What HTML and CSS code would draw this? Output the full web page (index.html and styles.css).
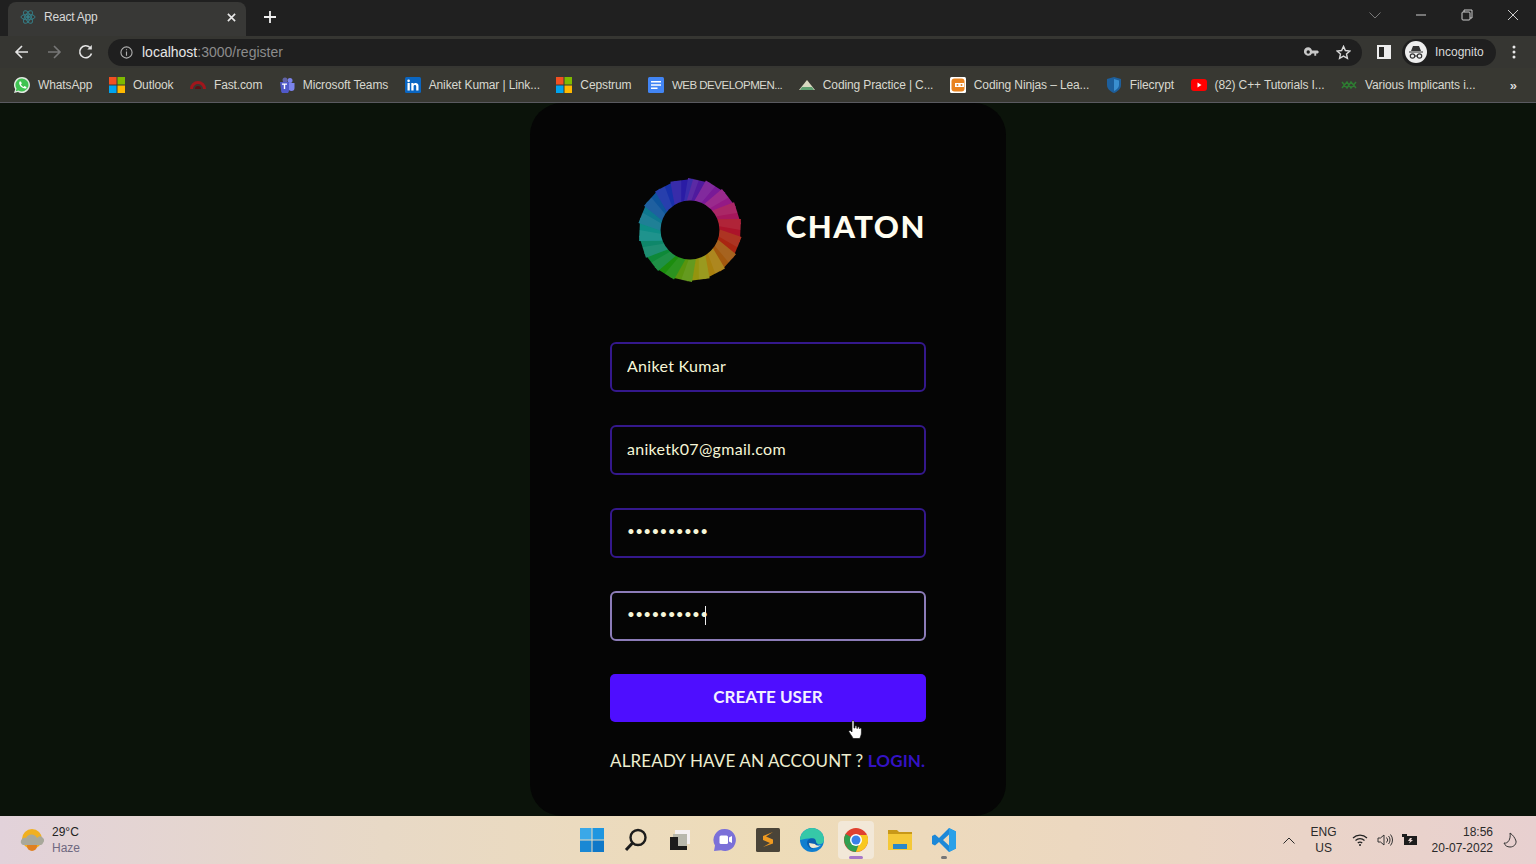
FILE: index.html
```html
<!DOCTYPE html>
<html lang="en">

<head>
    <meta charset="UTF-8">
    <meta name="viewport" content="width=device-width, initial-scale=1.0">
    <title>React App</title>
    <link rel="stylesheet" href="styles.css">
</head>

<body>
    <!-- barra de abas -->
    <header class="abas">
        <div class="aba">
            <svg class="favicon" viewBox="0 0 16 16" fill="none" stroke="#357d86" stroke-width="1">
                <ellipse cx="8" cy="8" rx="7" ry="2.8"/>
                <ellipse cx="8" cy="8" rx="7" ry="2.8" transform="rotate(60 8 8)"/>
                <ellipse cx="8" cy="8" rx="7" ry="2.8" transform="rotate(120 8 8)"/>
                <circle cx="8" cy="8" r="1.4" fill="#357d86"/>
            </svg>
            <span class="aba-titulo">React App</span>
            <svg class="aba-fechar" viewBox="0 0 10 10" stroke="#e8e8e8" stroke-width="1.8"><path d="M1 1l8 8M9 1l-8 8"/></svg>
        </div>
        <svg class="aba-nova" viewBox="0 0 12 12" stroke="#f0f0f0" stroke-width="1.8"><path d="M6 0v12M0 6h12"/></svg>
        <div class="janela">
            <svg viewBox="0 0 12 12" fill="none" stroke="#777" stroke-width="1"><path d="M0.5 3.5L6 9l5.500-5.500"/></svg>
            <svg viewBox="0 0 12 12" fill="none" stroke="#ccc" stroke-width="1"><path d="M1 6h10"/></svg>
            <svg viewBox="0 0 12 12" fill="none" stroke="#ccc" stroke-width="1"><rect x="1" y="3" width="8" height="8" rx="1"/><path d="M3 3V1h8v8H9"/></svg>
            <svg viewBox="0 0 12 12" fill="none" stroke="#ccc" stroke-width="1"><path d="M1 1l10 10M11 1L1 11"/></svg>
        </div>
    </header>

    <!-- barra de endereco -->
    <div class="ferramentas">
        <svg class="ico-nav" viewBox="0 0 16 16" fill="none" stroke="#e4e4e4" stroke-width="1.600"><path d="M14 8H2M8 2L2 8l6 6"/></svg>
        <svg class="ico-nav" viewBox="0 0 16 16" fill="none" stroke="#777" stroke-width="1.600"><path d="M2 8h12M8 2l6 6-6 6"/></svg>
        <svg class="ico-nav" viewBox="0 0 16 16" fill="none" stroke="#e4e4e4" stroke-width="1.600"><path d="M13.500 9.500A6 6 0 1 1 12 3.500"/><path d="M13.800 1v4.500H9.300" fill="#e4e4e4" stroke="none"/></svg>
        <div class="endereco">
            <svg class="ico-info" viewBox="0 0 14 14" fill="none" stroke="#b0b0b0" stroke-width="1.200"><circle cx="7" cy="7" r="6"/><path d="M7 6v4.500M7 3.500v1.200"/></svg>
            <span class="url"><span class="url-host">localhost</span>:3000/register</span>
            <svg class="ico-chave" viewBox="0 0 16 10" fill="#c8c8c8"><path d="M4.500 0a4.500 4.500 0 1 0 4 6.500H11V9h2V6.500h1.500L16 5l-1.500-1.500h-6A4.500 4.500 0 0 0 4.500 0zm0 3.200a1.800 1.800 0 1 1 0 3.600 1.800 1.800 0 0 1 0-3.600z"/></svg>
            <svg class="ico-estrela" viewBox="0 0 16 16" fill="none" stroke="#d8d8d8" stroke-width="1.500"><path d="M8 1.500l2 4.400 4.800.5-3.600 3.200 1 4.700L8 11.900l-4.200 2.400 1-4.700L1.200 6.400 6 5.900z"/></svg>
        </div>
        <svg class="ico-painel" viewBox="0 0 14 14"><path d="M0 0h14v14H0z" fill="#eee"/><path d="M2 2h5v10H2z" fill="#2a2a28"/></svg>
        <div class="anonimo">
            <svg class="anonimo-ico" viewBox="0 0 22 22">
                <circle cx="11" cy="11" r="11" fill="#eee"/>
                <path d="M6 10l2-5h6l2 5zM4 10.500h14v1H4z" fill="#333"/>
                <g fill="none" stroke="#333" stroke-width="1.200"><circle cx="7.500" cy="15" r="2.200"/><circle cx="14.500" cy="15" r="2.200"/><path d="M9.700 15h2.600"/></g>
            </svg>
            <span>Incognito</span>
        </div>
        <svg class="ico-menu" viewBox="0 0 4 14" fill="#e8e8e8"><circle cx="2" cy="2" r="1.500"/><circle cx="2" cy="7" r="1.500"/><circle cx="2" cy="12" r="1.500"/></svg>
    </div>

    <!-- favoritos -->
    <nav class="favoritos">
        <a class="fav"><svg viewBox="0 0 16 16"><path d="M8 0a8 8 0 0 0-6.800 12.200L0 16l3.900-1.100A8 8 0 1 0 8 0z" fill="#e0e8e0"/><path d="M8 1.500a6.500 6.500 0 0 0-5.500 10l-.7 2.700 2.700-.7A6.500 6.500 0 1 0 8 1.500z" fill="#3fc351"/><path d="M5.500 4.500l1.500 0 .8 2-.9 1c.6 1.200 1.500 2 2.600 2.500l1-1 1.900.9v1.400c-3.800 1.200-8.400-3.300-6.900-6.800z" fill="#fff"/></svg><span>WhatsApp</span></a>
        <a class="fav"><svg viewBox="0 0 16 16"><path d="M0 0h7.500v7.500H0z" fill="#f25022"/><path d="M8.500 0H16v7.500H8.500z" fill="#7fba00"/><path d="M0 8.500h7.500V16H0z" fill="#00a4ef"/><path d="M8.500 8.500H16V16H8.500z" fill="#ffb900"/></svg><span>Outlook</span></a>
        <a class="fav"><svg viewBox="0 0 16 16"><path d="M0 12a8 8 0 0 1 16 0h-3a5 5 0 0 0-10 0z" fill="#a0161c"/><path d="M5 12a3 3 0 0 1 6 0z" fill="#5a1014"/></svg><span>Fast.com</span></a>
        <a class="fav"><svg viewBox="0 0 16 16"><circle cx="11" cy="3.500" r="2.500" fill="#7b83eb"/><circle cx="6" cy="3" r="2.500" fill="#6264a7"/><path d="M9 6h6.500v5a3 3 0 0 1-6 0z" fill="#7b83eb"/><path d="M1 5h9v8a4 4 0 0 1-8 0z" fill="#5059c9"/><path d="M3 6.500h5v1.300H6.200V12H4.800V7.800H3z" fill="#fff"/></svg><span>Microsoft Teams</span></a>
        <a class="fav"><svg viewBox="0 0 16 16"><rect width="16" height="16" rx="1.500" fill="#0a66c2"/><path d="M2.500 6h2.300v7.500H2.500zM3.600 2.500a1.300 1.300 0 1 1 0 2.700 1.300 1.300 0 0 1 0-2.700zM6.300 6h2.200v1c.9-1.600 5-1.800 5 1.700v4.800h-2.300V9.200c0-1.700-2.600-1.600-2.600 0v4.300H6.300z" fill="#fff"/></svg><span>Aniket Kumar | Link...</span></a>
        <a class="fav"><svg viewBox="0 0 16 16"><path d="M0 0h7.500v7.500H0z" fill="#f25022"/><path d="M8.500 0H16v7.500H8.500z" fill="#7fba00"/><path d="M0 8.500h7.500V16H0z" fill="#00a4ef"/><path d="M8.500 8.500H16V16H8.500z" fill="#ffb900"/></svg><span>Cepstrum</span></a>
        <a class="fav fav-caps"><svg viewBox="0 0 16 16"><rect width="16" height="16" rx="1.500" fill="#4285f4"/><path d="M3 4h10v1.600H3zM3 7.200h10v1.600H3zM3 10.400h6.500V12H3z" fill="#fff"/></svg><span>WEB DEVELOPMEN...</span></a>
        <a class="fav"><svg viewBox="0 0 16 16"><path d="M8 3l8 10H0z" fill="#d8d8c0"/><path d="M3 10h10l2 3H1z" fill="#5fa070"/></svg><span>Coding Practice | C...</span></a>
        <a class="fav"><svg viewBox="0 0 16 16"><rect width="16" height="16" rx="1.500" fill="#fff"/><rect x="1.500" y="1.500" width="13" height="13" rx="3" fill="#e8821e"/><path d="M5 6h9v4H5z" fill="#fff"/><circle cx="7.500" cy="8" r="1" fill="#e8821e"/><circle cx="11.500" cy="8" r="1" fill="#e8821e"/></svg><span>Coding Ninjas – Lea...</span></a>
        <a class="fav"><svg viewBox="0 0 16 16"><path d="M8 0l7 2v6c0 4-3.500 6.500-7 8-3.500-1.500-7-4-7-8V2z" fill="#1d5f9c"/><path d="M8 2l5 1.500V8c0 2.800-2.500 4.700-5 6z" fill="#3a8fd0"/></svg><span>Filecrypt</span></a>
        <a class="fav"><svg viewBox="0 0 16 16"><rect y="2" width="16" height="12" rx="3" fill="#f00"/><path d="M6.500 5.500l4 2.500-4 2.500z" fill="#fff"/></svg><span>(82) C++ Tutorials I...</span></a>
        <a class="fav"><svg viewBox="0 0 16 16" fill="none" stroke="#2e7d32" stroke-width="1.500"><path d="M1 5l5 6 4-6 5 6M1 11l5-6 4 6 5-6"/></svg><span>Various Implicants i...</span></a>
        <span class="mais">»</span>
    </nav>

    <!-- pagina de cadastro -->
    <main class="pagina">
        <form class="cartao">
            <div class="marca">
                <svg class="logo" viewBox="-53 -53 106 106">
                    <defs>
                        <polygon id="gomo" points="-6,-29 7,-29 21,-48 -2,-53"/>
                        <polygon id="faceta" points="-6,-29 1,-29 9,-51 -2,-53"/>
                    </defs>
                    <use href="#gomo" fill="#5a1eb4" transform="rotate(0)"/>
                    <use href="#gomo" fill="#8a1eac" transform="rotate(20)"/>
                    <use href="#gomo" fill="#a81e98" transform="rotate(40)"/>
                    <use href="#gomo" fill="#bc1a68" transform="rotate(60)"/>
                    <use href="#gomo" fill="#c41630" transform="rotate(80)"/>
                    <use href="#gomo" fill="#c02a14" transform="rotate(100)"/>
                    <use href="#gomo" fill="#b86410" transform="rotate(120)"/>
                    <use href="#gomo" fill="#c09210" transform="rotate(140)"/>
                    <use href="#gomo" fill="#a8a810" transform="rotate(160)"/>
                    <use href="#gomo" fill="#66a810" transform="rotate(180)"/>
                    <use href="#gomo" fill="#20a010" transform="rotate(200)"/>
                    <use href="#gomo" fill="#109c40" transform="rotate(220)"/>
                    <use href="#gomo" fill="#109a78" transform="rotate(240)"/>
                    <use href="#gomo" fill="#10a098" transform="rotate(260)"/>
                    <use href="#gomo" fill="#1088a4" transform="rotate(280)"/>
                    <use href="#gomo" fill="#1060b0" transform="rotate(300)"/>
                    <use href="#gomo" fill="#1a38c0" transform="rotate(320)"/>
                    <use href="#gomo" fill="#3020bc" transform="rotate(340)"/>
                    <g fill="#fff" opacity="0.08">
                        <use href="#faceta" transform="rotate(0)"/>
                        <use href="#faceta" transform="rotate(20)"/>
                        <use href="#faceta" transform="rotate(40)"/>
                        <use href="#faceta" transform="rotate(60)"/>
                        <use href="#faceta" transform="rotate(80)"/>
                        <use href="#faceta" transform="rotate(100)"/>
                        <use href="#faceta" transform="rotate(120)"/>
                        <use href="#faceta" transform="rotate(140)"/>
                        <use href="#faceta" transform="rotate(160)"/>
                        <use href="#faceta" transform="rotate(180)"/>
                        <use href="#faceta" transform="rotate(200)"/>
                        <use href="#faceta" transform="rotate(220)"/>
                        <use href="#faceta" transform="rotate(240)"/>
                        <use href="#faceta" transform="rotate(260)"/>
                        <use href="#faceta" transform="rotate(280)"/>
                        <use href="#faceta" transform="rotate(300)"/>
                        <use href="#faceta" transform="rotate(320)"/>
                        <use href="#faceta" transform="rotate(340)"/>
                    </g>
                    <circle r="30" fill="#050505"/>
                </svg>
                <h1>CHATON</h1>
            </div>
            <input class="campo" type="text" value="Aniket Kumar">
            <input class="campo" type="email" value="aniketk07@gmail.com">
            <input class="campo campo-senha" type="password" value="aniketk077">
            <div class="campo-foco">
                <input class="campo campo-senha campo-ativo" type="password" value="aniketk077">
                <span class="cursor-texto"></span>
            </div>
            <div class="campo-botao">
                <button class="botao" type="button">CREATE USER</button>
                <svg class="mao" viewBox="0 0 14 19"><path d="M4 1.500c0-1.500 2-1.500 2 0V8l1 0V6.500c0-1 1.700-1 1.800 0V8.300l.8 0V7.500c0-1 1.600-1 1.700 0v1l.6 0c0-.8 1.500-.8 1.500.3V13c0 2.500-1.500 4.500-1.500 5.500H5c-.3-1.500-1.500-2.500-4-6.500-.7-1.200.8-2.200 1.800-1.200L4 12z" fill="#fff" stroke="#111" stroke-width="0.700"/></svg>
            </div>
            <p class="rodape">ALREADY HAVE AN ACCOUNT ? <a class="entrar">LOGIN.</a></p>
        </form>
    </main>

    <!-- barra de tarefas -->
    <footer class="tarefas">
        <div class="clima">
            <svg class="clima-ico" viewBox="0 0 24 24">
                <circle cx="12" cy="11" r="10" fill="#f0b020"/>
                <circle cx="12" cy="18" r="5" fill="#e08020"/>
                <path d="M1 15a4 4 0 0 1 5-5 6 6 0 0 1 11 0 3.500 3.500 0 0 1 6 5 3 3 0 0 1-2 2H3a3 3 0 0 1-2-2z" fill="#a8a89a"/>
            </svg>
            <div class="clima-texto">
                <span class="clima-temp">29°C</span>
                <span class="clima-desc">Haze</span>
            </div>
        </div>

        <div class="apps">
            <div class="app">
                <svg viewBox="0 0 24 24"><path d="M0 0h11.500v11.500H0z" fill="#3aa8e8"/><path d="M12.500 0H24v11.500H12.500z" fill="#1e96e0"/><path d="M0 12.500h11.500V24H0z" fill="#1a88d4"/><path d="M12.500 12.500H24V24H12.500z" fill="#0f78c8"/></svg>
            </div>
            <div class="app">
                <svg viewBox="0 0 24 24" fill="none" stroke="#1c1c1c"><circle cx="14" cy="9.500" r="7.500" stroke-width="2.400"/><path d="M8.500 15L2 22" stroke-width="3"/></svg>
            </div>
            <div class="app">
                <svg viewBox="0 0 24 24"><path d="M7 2h15v14H7z" fill="#f4f0f0"/><path d="M5 6h14v12H5z" fill="#b8b8ac"/><path d="M2 9h8v9h9v4H2z" fill="#1c1c1c"/></svg>
            </div>
            <div class="app">
                <svg viewBox="0 0 24 24"><path d="M13 1a11 11 0 1 1-4 21.300L2 23l1-5.500A11 11 0 0 1 13 1z" fill="#7b70d8"/><rect x="7.500" y="7.500" width="8.500" height="8.500" rx="1.500" fill="#fff"/><path d="M17 9.500l3-1.500v7l-3-1.500z" fill="#fff"/></svg>
            </div>
            <div class="app">
                <svg viewBox="0 0 24 24"><rect width="24" height="24" rx="1.500" fill="#4a4438"/><path d="M17 4L7 8v4l7 3-7 4 10-3.500v-4L10 8.500z" fill="#f09a20"/></svg>
            </div>
            <div class="app">
                <svg viewBox="0 0 24 24"><circle cx="12" cy="12" r="12" fill="#0f7ed0"/><path d="M12 0a12 12 0 0 1 12 12c0 3-3 5-6 4s-3-4-6-5C7 9.500 2 12 0 12 0 5 6 0 12 0z" fill="#36c8a8"/><path d="M7 15c0-4 4-5.500 7-4.500 3 1 1 5 4 5.500-3 3-6 1-5 5-3 0-6-3-6-6z" fill="#0a5fb0"/><path d="M9 15c0 3 2 5 4 5 3 0 6-1 8-3-2 1-5 1-6-1z" fill="#f0e8d0"/></svg>
            </div>
            <div class="app app-ativo">
                <svg viewBox="0 0 24 24"><circle cx="12" cy="12" r="12" fill="#e04030"/><path d="M12 12L2 18A12 12 0 0 1 1.600 6z" fill="#30a050"/><path d="M12 24A12 12 0 0 1 2 18l10-6 4.500 0z" fill="#30a050"/><path d="M12 24a12 12 0 0 0 11-17H12l4.500 5z" fill="#f8c820"/><circle cx="12" cy="12" r="6" fill="#fff"/><circle cx="12" cy="12" r="4.500" fill="#3a80e8"/></svg>
                <span class="marcador marcador-ativo"></span>
            </div>
            <div class="app">
                <svg viewBox="0 0 24 24"><path d="M0 2h9l2 2h13v4H0z" fill="#c89818"/><path d="M0 6h24v16H0z" fill="#f4c838"/><path d="M5 16h14v5H5z" fill="#2a88c8"/></svg>
            </div>
            <div class="app">
                <svg viewBox="0 0 24 24"><path d="M17 0l7 3.500v17L17 24 7 14l-4 3.500L0 16V8l3-1.500L7 10zM17 6.500L11 12l6 5.500z" fill="#1c88d8"/><path d="M17 0l7 3.500v17L17 24z" fill="#2aa0e8"/></svg>
                <span class="marcador"></span>
            </div>
        </div>

        <div class="bandeja">
            <svg class="band-seta" viewBox="0 0 12 7" fill="none" stroke="#2a2a2a" stroke-width="1"><path d="M0.500 6.500L6 1l5.500 5.500"/></svg>
            <div class="band-idioma"><span>ENG</span><span>US</span></div>
            <svg class="band-ico" viewBox="0 0 16 14" fill="none" stroke="#222" stroke-width="1.200"><path d="M1 5a10 10 0 0 1 14 0M3.500 7.500a6.500 6.500 0 0 1 9 0M5.800 10a3 3 0 0 1 4.400 0"/><circle cx="8" cy="12" r="1" fill="#222" stroke="none"/></svg>
            <svg class="band-ico" viewBox="0 0 16 14" fill="none" stroke="#333" stroke-width="1"><path d="M1 5v4h2.500L7 12V2L3.500 5z"/><path d="M9.500 4.500a3.500 3.500 0 0 1 0 5M11.500 3a6 6 0 0 1 0 8M13.500 1.500a8.500 8.500 0 0 1 0 11"/></svg>
            <svg class="band-ico" viewBox="0 0 16 14"><path d="M2 3h13v9H2z" fill="#1c1c1c"/><path d="M0 1h5v3H0z" fill="#1c1c1c"/><path d="M8 5l-2 3h2l-1 2.500L11 7H9l1-2z" fill="#e8d4d0"/></svg>
            <div class="band-hora"><span>18:56</span><span>20-07-2022</span></div>
            <svg class="band-lua" viewBox="0 0 14 16" fill="none" stroke="#333" stroke-width="1"><path d="M7 1c3 2 5 5 6 8 .5 3-2 6-6 6-3 0-5-1.500-6-4 4 1 7-4 6-10z"/></svg>
        </div>
    </footer>
</body>

</html>
```

FILE: styles.css
```css
* {
    margin: 0;
    padding: 0;
    box-sizing: border-box;
}

body {
    width: 100vw;
    height: 100vh;
    overflow: hidden;
    display: flex;
    flex-direction: column;
    font-family: "Liberation Sans", Arial, sans-serif;
    background-color: #0b130a;
}

/* barra de abas */
.abas {
    height: 36px;
    display: flex;
    align-items: flex-end;
    background-color: #202020;
    flex: none;
}

.aba {
    width: 238px;
    height: 34px;
    margin-left: 8px;
    padding: 0 10px 4px 12px;
    display: flex;
    align-items: center;
    background-color: #383836;
    border-radius: 8px 8px 0 0;
}

.favicon {
    width: 16px;
    height: 16px;
}

.aba-titulo {
    margin-left: 8px;
    font-size: 12px;
    letter-spacing: -0.2px;
    color: #d8d8d8;
    flex: 1;
}

.aba-fechar {
    width: 9px;
    height: 9px;
}

.aba-nova {
    width: 12px;
    height: 12px;
    margin: 0 0 13px 18px;
}

.janela {
    margin-left: auto;
    height: 30px;
    align-self: flex-start;
    display: flex;
    align-items: center;
    gap: 34px;
    padding-right: 17px;
}

.janela svg {
    width: 12px;
    height: 12px;
}

/* barra de endereco */
.ferramentas {
    height: 32px;
    display: flex;
    align-items: center;
    padding-left: 14px;
    background-color: #363632;
    flex: none;
}

.ico-nav {
    width: 16px;
    height: 16px;
    margin-right: 16px;
}

.endereco {
    width: 1254px;
    height: 27px;
    margin-left: -2px;
    padding: 0 11px 0 12px;
    display: flex;
    align-items: center;
    background-color: #1f1f1f;
    border-radius: 14px;
}

.ico-info {
    width: 13px;
    height: 13px;
}

.url {
    margin-left: 9px;
    font-size: 14px;
    color: #8c8c8c;
    flex: 1;
}

.url-host {
    color: #e6e6e6;
}

.ico-chave {
    width: 15px;
    height: 10px;
    margin-right: 17px;
}

.ico-estrela {
    width: 15px;
    height: 15px;
}

.ico-painel {
    width: 14px;
    height: 14px;
    margin-left: 15px;
}

.anonimo {
    width: 94px;
    height: 27px;
    margin-left: 11px;
    padding-left: 3px;
    display: flex;
    align-items: center;
    gap: 8px;
    font-size: 12px;
    color: #d8d8d8;
    background-color: #1f1f1f;
    border-radius: 14px;
}

.anonimo-ico {
    width: 22px;
    height: 22px;
}

.ico-menu {
    width: 4px;
    height: 14px;
    margin-left: 16px;
}

/* favoritos */
.favoritos {
    height: 35px;
    display: flex;
    align-items: center;
    gap: 16.5px;
    padding-left: 14px;
    background-color: #383832;
    border-bottom: 1px solid #5a5a60;
    flex: none;
}

.fav {
    display: flex;
    align-items: center;
    gap: 8px;
    font-size: 12px;
    letter-spacing: -0.12px;
    color: #d8d8d0;
    white-space: nowrap;
}

.fav svg {
    width: 16px;
    height: 16px;
}

.fav-caps {
    font-size: 11.5px;
    letter-spacing: -0.5px;
}

.mais {
    margin-left: auto;
    margin-right: 19px;
    font-size: 13px;
    font-weight: bold;
    color: #d8d8d8;
}

/* pagina */
.pagina {
    flex: 1;
    min-height: 0;
    display: flex;
    justify-content: center;
}

.cartao {
    width: 476px;
    padding: 75px 80px 0;
    display: flex;
    flex-direction: column;
    gap: 33px;
    background-color: #050505;
    border-radius: 32px;
}

.marca {
    height: 104px;
    margin-bottom: 27px;
    padding-left: 28px;
    display: flex;
    align-items: center;
    justify-content: space-between;
}

.logo {
    width: 104px;
    height: 104px;
    opacity: 0.88;
    flex: none;
}

.marca h1 {
    margin-bottom: 8px;
    font-family: Lato, sans-serif;
    font-size: 31px;
    font-weight: 900;
    letter-spacing: 1.5px;
    color: #fffdf0;
}

.campo {
    width: 100%;
    height: 50px;
    padding: 0 15px 4px;
    font-family: Lato, sans-serif;
    font-size: 16px;
    letter-spacing: 0.3px;
    color: #f6f6d8;
    background-color: transparent;
    border: 2px solid #34188c;
    border-radius: 6px;
    outline: none;
}

.campo-senha {
    font-size: 13.5px;
}

.campo-foco {
    position: relative;
}

.campo-ativo {
    border-color: #8c7cb8;
}

.cursor-texto {
    position: absolute;
    top: 15px;
    left: 95px;
    width: 1px;
    height: 19px;
    background-color: #f0f0f0;
}

.campo-botao {
    position: relative;
}

.botao {
    width: 100%;
    height: 48px;
    padding-bottom: 4px;
    font-family: Lato, sans-serif;
    font-size: 17px;
    font-weight: 700;
    color: #f4f0ff;
    background-color: #4e0eff;
    border: none;
    border-radius: 5px;
}

.mao {
    position: absolute;
    top: 46px;
    left: 238px;
    width: 14px;
    height: 19px;
}

.rodape {
    margin-top: -5px;
    font-family: Lato, sans-serif;
    font-size: 17px;
    letter-spacing: 0.14px;
    color: #eeeed0;
    white-space: nowrap;
}

.entrar {
    font-weight: 700;
    color: #3412c4;
}

/* barra de tarefas */
.tarefas {
    height: 48px;
    display: grid;
    grid-template-columns: 1fr auto 1fr;
    align-items: center;
    background-image: linear-gradient(90deg, #e2d2da 0%, #e8d9c6 25%, #eedcb8 50%, #ecd8c0 70%, #e8d0d0 100%);
    flex: none;
}

.clima {
    display: flex;
    align-items: center;
    padding-left: 20px;
    gap: 8px;
}

.clima-ico {
    width: 24px;
    height: 24px;
}

.clima-texto {
    display: flex;
    flex-direction: column;
    gap: 3px;
    font-size: 12px;
    line-height: 13px;
}

.clima-temp {
    color: #222;
}

.clima-desc {
    color: #6f6880;
}

.apps {
    display: flex;
    align-items: center;
}

.app {
    position: relative;
    width: 44px;
    height: 38px;
    display: flex;
    align-items: center;
    justify-content: center;
}

.app svg {
    width: 24px;
    height: 24px;
}

/* o fundo claro do app ativo e mais estreito que a celula */
.app-ativo {
    width: 36px;
    margin: 0 4px;
    background-color: #f2e8d8;
    border-radius: 4px;
}

.marcador {
    position: absolute;
    bottom: 0;
    left: 19px;
    width: 6px;
    height: 3px;
    background-color: #777;
    border-radius: 2px;
}

.marcador-ativo {
    left: 11px;
    width: 14px;
    background-color: #a878c8;
}

.bandeja {
    display: flex;
    align-items: center;
    justify-content: flex-end;
    padding-right: 19px;
    font-size: 12px;
    color: #2a2a2a;
}

.band-seta {
    width: 12px;
    height: 7px;
    margin-right: 16px;
}

.band-idioma {
    display: flex;
    flex-direction: column;
    align-items: center;
    gap: 3px;
    line-height: 13px;
    margin-right: 15px;
}

.band-ico {
    width: 16px;
    height: 14px;
    margin-right: 9px;
}

.band-hora {
    display: flex;
    flex-direction: column;
    align-items: flex-end;
    gap: 3px;
    line-height: 13px;
    margin-left: 5px;
}

.band-lua {
    width: 14px;
    height: 16px;
    margin-left: 10px;
}
```
